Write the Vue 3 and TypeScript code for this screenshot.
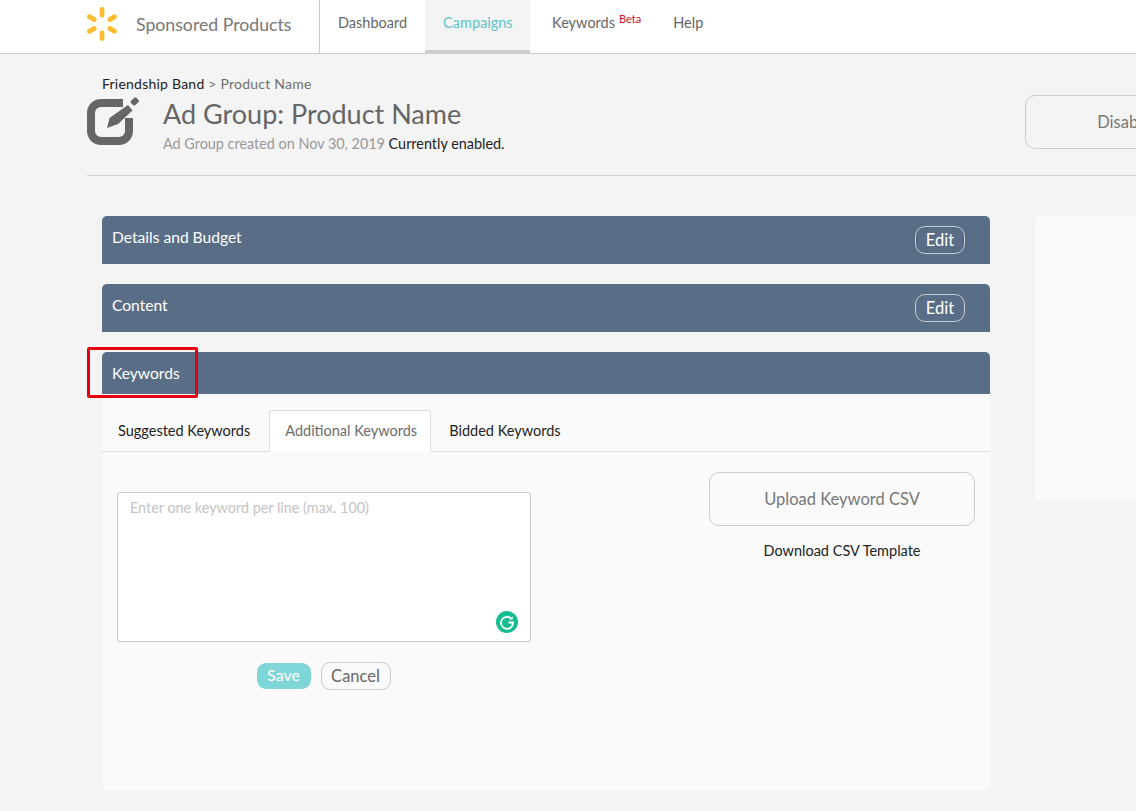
<script setup lang="ts">
const navItems: { label: string; active?: boolean; beta?: boolean }[] = [
  { label: 'Dashboard' },
  { label: 'Campaigns', active: true },
  { label: 'Keywords', beta: true },
  { label: 'Help' },
]
const tabs: { label: string; active?: boolean }[] = [
  { label: 'Suggested Keywords' },
  { label: 'Additional Keywords', active: true },
  { label: 'Bidded Keywords' },
]
const rays = [0, 60, 120, 180, 240, 300]
</script>

<template>
  <div class="page">
    <header class="topbar">
      <div class="brand">
        <svg class="spark" width="32" height="36" viewBox="0 0 32 36" aria-hidden="true">
          <rect
            v-for="r in rays"
            :key="r"
            x="13.600"
            y="1"
            width="4.800"
            height="10.500"
            rx="2.400"
            fill="#fdbb2d"
            :transform="`rotate(${r} 16 18)`"
          />
        </svg>
        <span class="brand-name">Sponsored Products</span>
      </div>
      <nav class="nav">
        <a v-for="item in navItems" :key="item.label" class="nav-item" :class="{ active: item.active, beta: item.beta }">
          {{ item.label }}<sup v-if="item.beta" class="beta-tag">Beta</sup>
        </a>
      </nav>
    </header>

    <section class="intro">
      <div class="crumbs"><span class="dark">Friendship Band</span> &gt; Product Name</div>
      <div class="title-row">
        <svg class="edit-icon" width="52" height="49" viewBox="0 0 52 49" aria-hidden="true">
          <path d="M36 6H14A10 10 0 0 0 4 16V34A10 10 0 0 0 14 44H32A10 10 0 0 0 42 34V21" fill="none" stroke="#666" stroke-width="8" />
          <path d="M20 31 22.500 21 41 8 45.500 13.500 31 27Z" fill="#666" />
          <rect x="44" y="1.500" width="7.500" height="6" rx="1.500" fill="#666" transform="rotate(-43 47.700 4.500)" />
        </svg>
        <div class="title-text">
          <h1>Ad Group: Product Name</h1>
          <p>Ad Group created on Nov 30, 2019 <span class="dark">Currently enabled.</span></p>
        </div>
        <button class="disable-btn">Disable</button>
      </div>
    </section>

    <main class="columns">
      <div class="panels">
        <div class="bar">
          <span>Details and Budget</span>
          <button class="edit-btn">Edit</button>
        </div>
        <div class="bar">
          <span>Content</span>
          <button class="edit-btn">Edit</button>
        </div>
        <div class="keywords">
          <div class="bar bar-open">
            <span>Keywords</span>
            <i class="callout"></i>
          </div>
          <div class="tabs">
            <a v-for="tab in tabs" :key="tab.label" class="tab" :class="{ active: tab.active }">{{ tab.label }}</a>
          </div>
          <div class="kw-body">
            <div class="kw-left">
              <div class="textarea-wrap">
                <textarea class="kw-input" placeholder="Enter one keyword per line (max. 100)"></textarea>
                <svg class="grammarly" width="22" height="22" viewBox="0 0 22 22" aria-hidden="true">
                  <circle cx="11" cy="11" r="11" fill="#16bd91" />
                  <path d="M15.500 7.800A6 6 0 1 0 17 11.500H12.500" fill="none" stroke="#fff" stroke-width="1.800" />
                  <path d="M13.500 8.500h3.200v-3.200z" fill="#fff" />
                </svg>
              </div>
              <div class="actions">
                <button class="save-btn">Save</button>
                <button class="cancel-btn">Cancel</button>
              </div>
            </div>
            <div class="kw-right">
              <button class="upload-btn">Upload Keyword CSV</button>
              <a class="download">Download CSV Template</a>
            </div>
          </div>
        </div>
      </div>
      <aside class="side-card"></aside>
    </main>
  </div>
</template>

<style>
html,
body {
  margin: 0;
  background: #f4f4f4;
  overflow: hidden;
}
</style>

<style scoped>
.page {
  width: 1136px;
  height: 811px;
  overflow: hidden;
  background: #f4f4f4;
  font-family: Lato, "Open Sans", sans-serif;
  color: #666;
  box-sizing: border-box;
}
.topbar {
  display: flex;
  height: 54px;
  box-sizing: border-box;
  background: #fff;
  border-bottom: 1px solid #ccc;
  padding-left: 87px;
}
.brand {
  display: flex;
  align-items: center;
  width: 233px;
  border-right: 1px solid #ccc;
  box-sizing: border-box;
  height: 53px;
}
.spark {
  flex: none;
  margin-left: -1px;
  margin-top: -5px;
}
.brand-name {
  margin-left: 18px;
  font-size: 17.700px;
  color: #777;
  margin-top: -5px;
}
.nav {
  display: flex;
  padding-left: 18px;
  height: 53px;
}
.nav-item {
  display: block;
  padding-top: 14px;
  font-size: 14.500px;
  line-height: 18px;
  color: #666;
  margin-right: 18px;
  box-sizing: border-box;
  white-space: nowrap;
}
.nav-item.active {
  width: 105px;
  padding-left: 18px;
  background: #f4f4f4;
  border-bottom: 3px solid #ccc;
  color: #5cc5c9;
  margin-right: 22px;
}
.nav-item.beta {
  margin-right: 32px;
}
.beta-tag {
  font-size: 11px;
  line-height: 0;
  color: #c8102e;
  margin-left: 4px;
  vertical-align: 5px;
}
.intro {
  margin-left: 87px;
  height: 122px;
  border-bottom: 1px solid #d4d4d4;
  box-sizing: border-box;
  padding-top: 21px;
}
.crumbs {
  margin-left: 15px;
  font-size: 14px;
  line-height: 17px;
  letter-spacing: 0.230px;
  color: #6f6f6f;
}
.dark {
  color: #222;
}
.title-row {
  display: flex;
  position: relative;
  margin-top: 5px;
}
.edit-icon {
  flex: none;
}
.title-text {
  margin-left: 24px;
  width: 862px;
  flex: none;
}
.title-text h1 {
  margin: 0;
  font-size: 27px;
  font-weight: 400;
  line-height: 30px;
  color: #666;
  padding-top: 2px;
}
.title-text p {
  margin: 6px 0 0;
  font-size: 14.400px;
  line-height: 17px;
  color: #999;
}
.disable-btn {
  flex: none;
  width: 198px;
  height: 54px;
  margin-top: -2px;
  border: 1px solid #ccc;
  border-radius: 10px;
  background: transparent;
  font: inherit;
  font-size: 16.500px;
  color: #777;
  padding: 0;
}
.columns {
  display: flex;
  align-items: flex-start;
  padding: 40px 0 0 102px;
}
.panels {
  flex: none;
  width: 888px;
  display: flex;
  flex-direction: column;
  gap: 20px;
}
.bar {
  display: flex;
  justify-content: space-between;
  height: 48px;
  box-sizing: border-box;
  padding: 13px 25px 0 10px;
  background: #5a6d86;
  border-radius: 5px 5px 0 0;
  color: #fff;
  font-size: 15.600px;
  line-height: 16px;
  position: relative;
}
.bar-open {
  height: 42px;
}
.edit-btn {
  width: 50px;
  height: 28px;
  margin-top: -3px;
  border: 1px solid #c5ccd6;
  border-radius: 10px;
  background: transparent;
  color: #fff;
  font: inherit;
  font-size: 16.500px;
  padding: 0;
}
.callout {
  position: absolute;
  left: -15px;
  top: -5px;
  width: 111px;
  height: 51px;
  box-sizing: border-box;
  border: 3px solid #e60012;
  border-radius: 2px;
}
.keywords {
  height: 438px;
  background: #fafafa;
  border-radius: 5px;
}
.tabs {
  display: flex;
  height: 58px;
  padding-top: 16px;
  box-sizing: border-box;
  border-bottom: 1px solid #ddd;
}
.tab {
  display: block;
  height: 42px;
  box-sizing: border-box;
  padding: 11px 18px 0 15px;
  font-size: 14.500px;
  line-height: 17px;
  color: #222;
  border: 1px solid transparent;
  white-space: nowrap;
}
.tab.active {
  width: 162px;
  height: 42px;
  padding: 11px 0 0 15px;
  color: #6b6b6b;
  background: #fff;
  border: 1px solid #ddd;
  border-bottom: 1px solid #fff;
  border-radius: 3px 3px 0 0;
  margin-right: 2px;
}
.kw-body {
  display: flex;
  justify-content: space-between;
  padding: 20px 15px 0;
}
.kw-left {
  width: 414px;
  padding-top: 20px;
}
.textarea-wrap {
  position: relative;
  height: 150px;
}
.kw-input {
  display: block;
  width: 100%;
  height: 100%;
  box-sizing: border-box;
  resize: none;
  border: 1px solid #c8c8c8;
  border-radius: 3px;
  background: #fff;
  padding: 6px 12px;
  font-family: inherit;
  font-size: 14.400px;
  line-height: 17px;
  outline: none;
}
.kw-input::placeholder {
  color: #c4c4c4;
  opacity: 1;
}
.grammarly {
  position: absolute;
  right: 13px;
  bottom: 9px;
}
.actions {
  display: flex;
  align-items: center;
  justify-content: center;
  gap: 10px;
  margin-top: 20px;
  padding-right: 1px;
}
.save-btn {
  width: 54px;
  height: 26px;
  border: 0;
  border-radius: 9px;
  background: #7fd6d9;
  color: #fff;
  font: inherit;
  font-size: 16px;
  padding: 0 0 4px;
}
.cancel-btn {
  width: 70px;
  height: 28px;
  border: 1px solid #ccc;
  border-radius: 9px;
  background: transparent;
  color: #666;
  font: inherit;
  font-size: 16.500px;
  padding: 0;
}
.kw-right {
  width: 266px;
  display: flex;
  flex-direction: column;
  align-items: center;
}
.upload-btn {
  width: 100%;
  height: 54px;
  border: 1px solid #ccc;
  border-radius: 10px;
  background: transparent;
  color: #777;
  font: inherit;
  font-size: 16.500px;
  padding: 0;
}
.download {
  display: block;
  margin-top: 16px;
  font-size: 14.500px;
  line-height: 17px;
  color: #222;
}
.side-card {
  flex: none;
  width: 120px;
  height: 285px;
  margin-left: 45px;
  background: #fafafa;
  border-radius: 4px;
}
</style>
